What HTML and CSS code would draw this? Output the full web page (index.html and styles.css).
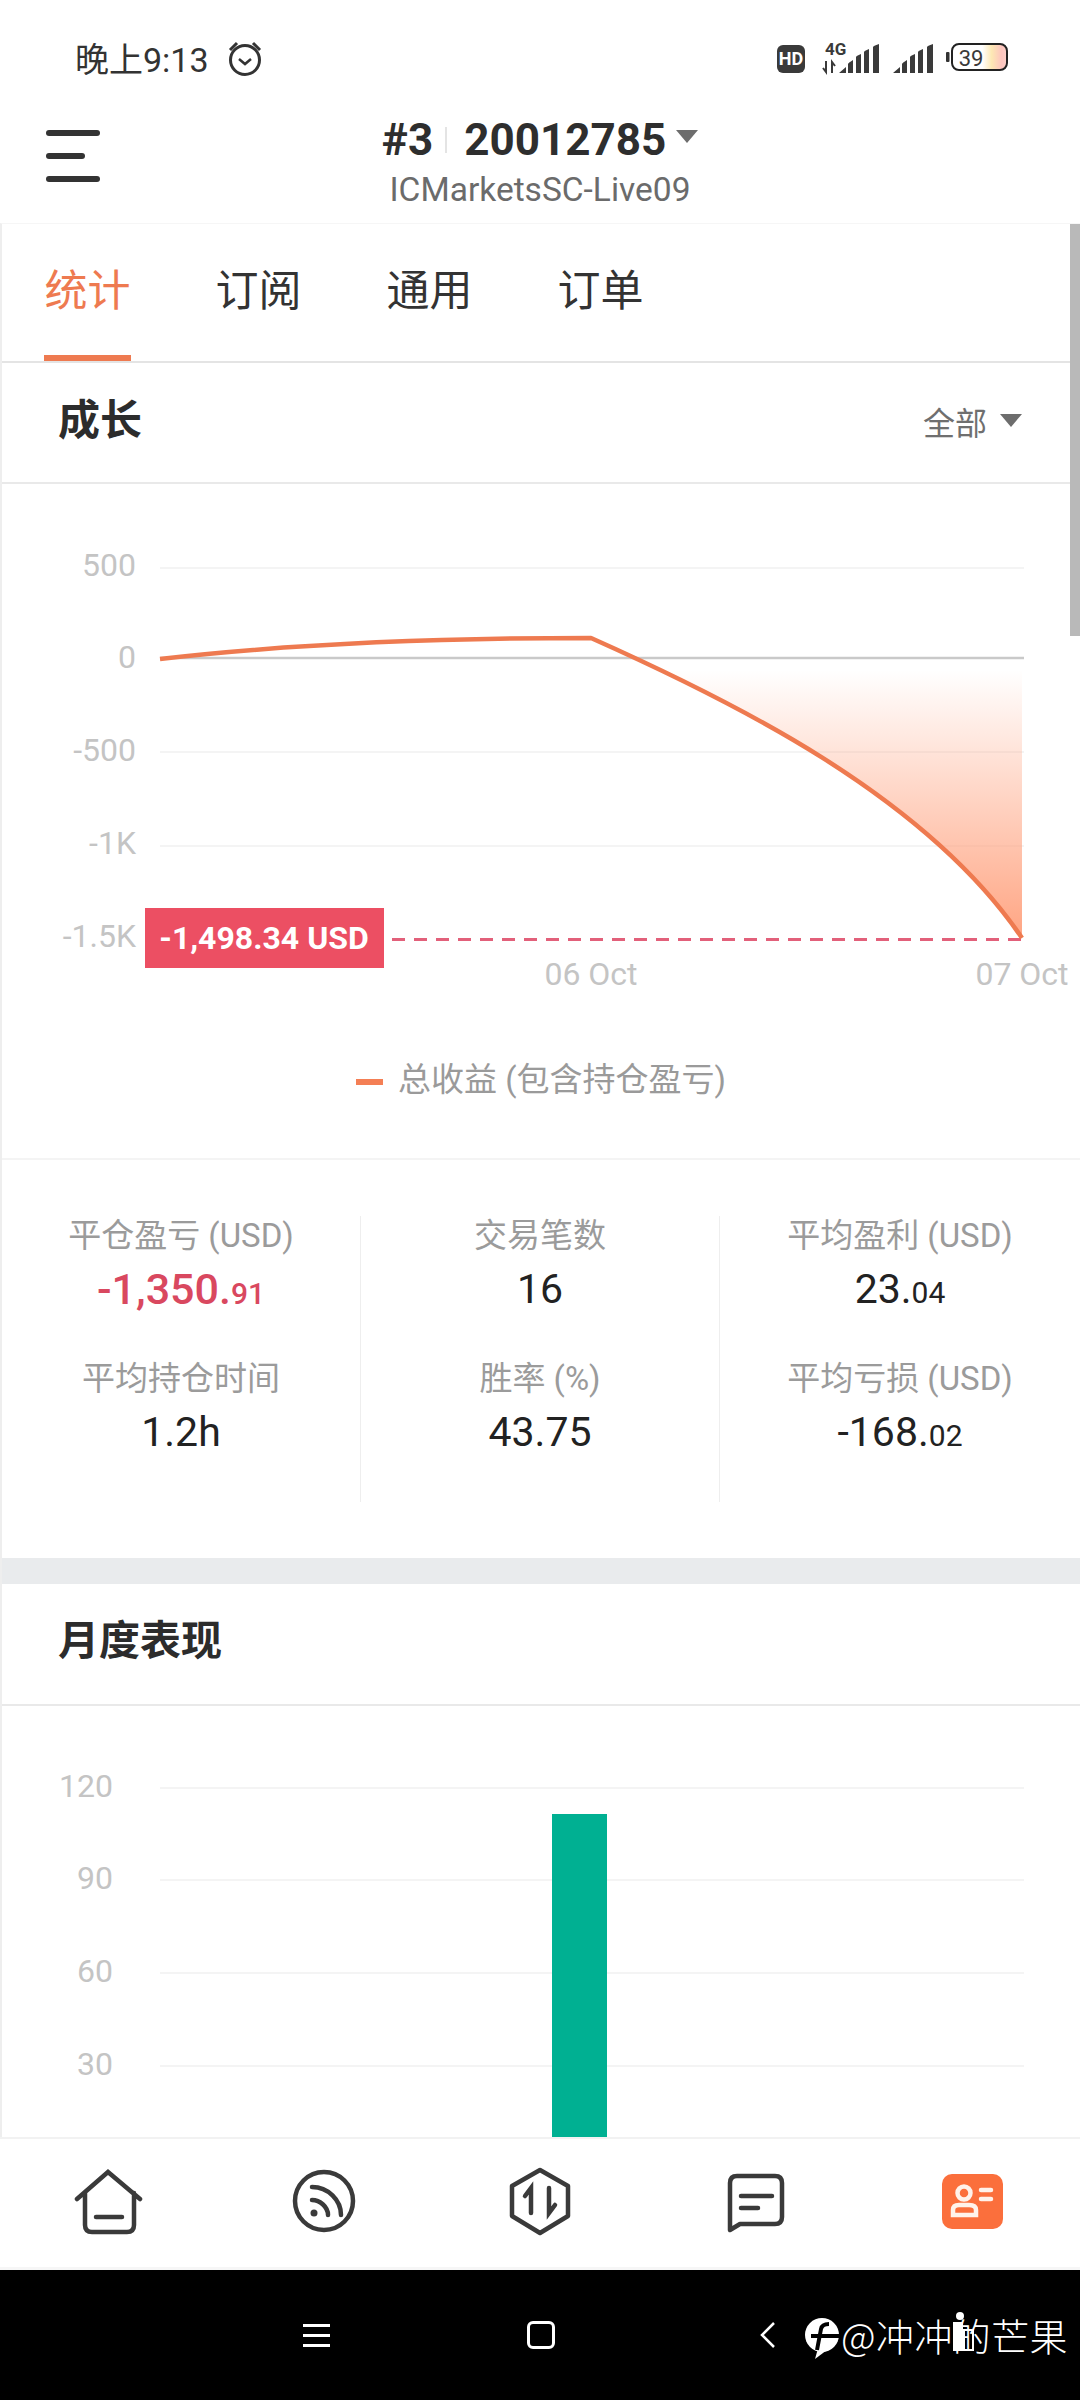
FILE: index.html
```html
<!DOCTYPE html>
<html lang="zh-CN">
<head>
<meta charset="utf-8">
<title>统计</title>
<link rel="stylesheet" href="styles.css">
</head>
<body>
<div class="page">
  <div class="status">
    <span class="time">晚上9:13</span>
    <svg class="alarm" viewBox="224 40 40 38"><circle cx="244" cy="60" r="14.5" fill="none" stroke="#333" stroke-width="3"/><path d="M238 59l6 5 6-5" fill="none" stroke="#333" stroke-width="2.5"/><path d="M229 50l7-7M259 50l-7-7" stroke="#333" stroke-width="3" fill="none"/></svg>
    <span class="status-gap"></span>
    <svg class="status-icons" viewBox="775 40 240 36">
      <rect x="777" y="45" width="28" height="28" rx="6" fill="#3a3a3a"/>
      <text x="791" y="65" class="hd">HD</text>
      <text x="825" y="55" class="fourg">4G</text>
      <path d="M826 61v11l-3-4M832 73V62l3 4" fill="none" stroke="#3a3a3a" stroke-width="2"/>
      <path d="M839 73l7-6v6zM848 73v-9q0-1 5-4v13zM856 73V57q0-1 5-3v19zM864 73V52q0-1 5-3v24zM873 73V47q0-1 6-3v29z" fill="#3a3a3a"/>
      <path d="M893 73l7-6v6zM902 73v-9q0-1 5-4v13zM910 73V57q0-1 5-3v19zM918 73V52q0-1 5-3v24zM927 73V47q0-1 6-3v29z" fill="#3a3a3a"/>
      <defs><linearGradient id="bat" x1="0" x2="1" y1="0" y2="0"><stop offset="0" stop-color="#fff"/><stop offset=".55" stop-color="#fff"/><stop offset=".72" stop-color="#fde8b4"/><stop offset=".9" stop-color="#fdc5be"/><stop offset="1" stop-color="#fdcfc8"/></linearGradient></defs>
      <rect x="946" y="52" width="3.5" height="10" rx="1" fill="#333"/>
      <rect x="952" y="44" width="55" height="26" rx="7" fill="url(#bat)" stroke="#222" stroke-width="2"/>
      <text x="971" y="66" class="batt">39</text>
    </svg>
  </div>
  <header class="head">
    <div class="burger"><i class="bl"></i><i class="bs"></i><i class="bl"></i></div>
    <div class="title">
      <div class="title-row"><span>#3</span><i class="title-sep"></i><span>20012785</span><i class="tri tri-dark"></i></div>
      <div class="server">ICMarketsSC-Live09</div>
    </div>
  </header>
  <main class="main">
    <nav class="tabs">
      <a class="tab tab-on">统计</a><a class="tab">订阅</a><a class="tab">通用</a><a class="tab">订单</a>
    </nav>
    <section class="sec-head">
      <h2 class="sec-title">成长</h2>
      <div class="range"><span>全部</span><i class="tri"></i></div>
    </section>
    <svg class="chart-a" viewBox="2 484 1068 556">
      <defs><linearGradient id="area" gradientUnits="userSpaceOnUse" x1="0" x2="0" y1="670" y2="938"><stop offset="0" stop-color="#ffa583" stop-opacity="0"/><stop offset="1" stop-color="#ffa583"/></linearGradient></defs>
      <path d="M160 568H1024M160 752H1024M160 846H1024" stroke="#f4f4f4" stroke-width="2"/>
      <path d="M160 658H1024" stroke="#c9c9c9" stroke-width="2.5"/>
      <path d="M591 638C730 700 925 795 1022 938V638Z" fill="url(#area)"/>
      <path d="M370 939.5H1022" stroke="#e2607a" stroke-width="3" stroke-dasharray="13 9"/>
      <path d="M160 659C290 644 450 638 591 638C730 700 925 795 1022 938" fill="none" stroke="#ee7a50" stroke-width="4.5" stroke-linejoin="round"/>
      <g class="axis">
        <text x="136" y="576">500</text><text x="136" y="668">0</text><text x="136" y="761">-500</text><text x="136" y="854">-1K</text><text x="136" y="947">-1.5K</text>
      </g>
      <g class="axis axis-x"><text x="591" y="985">06 Oct</text><text x="1022" y="985">07 Oct</text></g>
      <rect x="145" y="908" width="239" height="60" fill="#ec4f63"/>
      <text x="264" y="949" class="price">-1,498.34 USD</text>
    </svg>
    <div class="legend"><i class="legend-bar"></i><span>总收益 (包含持仓盈亏)</span></div>
    <section class="stats">
      <div class="col">
        <div class="cell"><div class="lab">平仓盈亏 (USD)</div><div class="val val-red">-1,350.<small>91</small></div></div>
        <div class="cell"><div class="lab">平均持仓时间</div><div class="val">1.2h</div></div>
      </div>
      <div class="col col-line">
        <div class="cell"><div class="lab">交易笔数</div><div class="val">16</div></div>
        <div class="cell"><div class="lab">胜率 (%)</div><div class="val">43.75</div></div>
      </div>
      <div class="col col-line">
        <div class="cell"><div class="lab">平均盈利 (USD)</div><div class="val">23.<small>04</small></div></div>
        <div class="cell"><div class="lab">平均亏损 (USD)</div><div class="val">-168.<small>02</small></div></div>
      </div>
    </section>
    <div class="band"></div>
    <section class="sec-head sec-head-b">
      <h2 class="sec-title sec-title-b">月度表现</h2>
    </section>
    <svg class="chart-b" viewBox="0 1706 1080 431">
      <path d="M160 1788H1024M160 1880H1024M160 1973H1024M160 2066H1024" stroke="#f4f4f4" stroke-width="2"/>
      <g class="axis"><text x="113" y="1797">120</text><text x="113" y="1889">90</text><text x="113" y="1982">60</text><text x="113" y="2075">30</text></g>
      <rect x="552" y="1814" width="55" height="323" fill="#00b092"/>
    </svg>
    <div class="scrollbar"></div>
  </main>
  <footer class="tabbar">
    <div class="tb"><svg class="tb-icon" viewBox="72 2165 70 70"><path d="M76 2198L107 2171L139 2198M84 2192V2224Q84 2231 91 2231H126Q133 2231 133 2224V2192M95 2216H121" /></svg></div>
    <div class="tb"><svg class="tb-icon" viewBox="288 2165 70 70"><circle cx="323" cy="2200" r="29"/><path d="M311 2186C327 2186 340 2199 340 2214M311 2199C319 2199 327 2206 327 2214"/><circle cx="313" cy="2212" r="3.5" class="solid"/></svg></div>
    <div class="tb"><svg class="tb-icon" viewBox="504 2165 70 70"><path d="M539 2169L567 2185V2215L539 2232L511 2215V2185Z" stroke-linejoin="round"/><path d="M530 2212V2187L524 2195M548 2187V2212L554 2204"/></svg></div>
    <div class="tb"><svg class="tb-icon" viewBox="720 2165 70 70"><path d="M729 2229V2182Q729 2175 736 2175H774Q781 2175 781 2182V2216Q781 2223 774 2223H739Z" stroke-linejoin="round"/><path d="M740 2195H771M740 2207H757"/></svg></div>
    <div class="tb"><svg class="tb-icon tb-on" viewBox="936 2165 70 70"><rect x="941" y="2173" width="61" height="55" rx="10" class="badge"/><circle cx="963" cy="2192" r="6.5" class="wh"/><path d="M952 2214V2209Q952 2204 958 2204H968Q975 2204 975 2209V2214Z" class="wh"/><path d="M980 2189H990M980 2198H990" class="wh"/></svg></div>
  </footer>
  <div class="navbar">
    <div class="nav-menu"><i></i><i></i><i></i></div>
    <div class="nav-home"></div>
    <svg class="nav-back" viewBox="0 0 16 28"><path d="M14 2L2 14L14 26"/></svg>
    <svg class="mark" viewBox="0 0 38 44"><circle cx="19" cy="18" r="17" fill="#fff"/><path d="M12 42L16 28L28 30Z" fill="#fff"/><path d="M14 33L18 12Q19 7 26 7M8 19H38" stroke="#000" stroke-width="4" fill="none"/></svg>
    <span class="wm">@冲冲的芒果</span>
    <svg class="person" viewBox="0 0 24 40"><circle cx="8" cy="4" r="4" fill="#fff"/><rect x="1" y="10" width="10" height="29" fill="#fff"/><rect x="12" y="18" width="9" height="20" fill="none" stroke="#fff" stroke-width="2"/></svg>
  </div>
</div>
</body>
</html>
```
FILE: styles.css
```css
* { box-sizing: border-box; }
html, body { margin: 0; padding: 0; background: #fff; }
body { font-family: Roboto, "Noto Sans CJK SC", sans-serif; color: #2c2c2c; }
.page { width: 1080px; height: 2400px; display: flex; flex-direction: column; overflow: hidden; background: #fff; }

.status { height: 100px; padding: 38px 0 0 75px; display: flex; align-items: flex-start; }
.time { font-size: 34px; line-height: 44px; color: #333; width: 150px; white-space: nowrap; }
.alarm { width: 40px; height: 38px; margin-top: 2px; }
.status-gap { flex: 1; }
.status-icons { width: 240px; height: 36px; margin: 2px 65px 0 0; }
.hd { font: 700 18px Roboto, sans-serif; fill: #fff; text-anchor: middle; }
.fourg { font: 700 17px Roboto, sans-serif; fill: #3a3a3a; }
.batt { font: 400 22px Roboto, sans-serif; fill: #3a3a3a; text-anchor: middle; }

.head { height: 123px; position: relative; display: flex; justify-content: center; }
.burger { position: absolute; left: 46px; top: 30px; display: flex; flex-direction: column; gap: 17px; }
.burger i { display: block; height: 6px; border-radius: 3px; background: #333; }
.bl { width: 54px; }
.bs { width: 39px; }
.title { width: 340px; display: flex; flex-direction: column; align-items: center; padding-top: 15px; }
.title-row { display: flex; align-items: center; height: 50px; font-size: 44px; font-weight: 700; color: #2e2e2e; white-space: nowrap; }
.title-sep { width: 2px; height: 26px; background: #e4e4e4; margin: 0 17px 0 12px; }
.tri { width: 0; height: 0; border-style: solid; border-width: 13px 11px 0; border-color: #6d6d6d transparent transparent; display: block; }
.tri-dark { margin: 0 0 8px 10px; }
.server { font-size: 33.5px; line-height: 38px; margin-top: 6px; color: #6b6b6b; white-space: nowrap; }

.main { flex: 1; min-height: 0; position: relative; overflow: hidden; border-left: 2px solid #eee; border-top: 1px solid #f6f6f6; }
.tabs { height: 139px; border-bottom: 2px solid #e4e4e4; padding-left: 42px; display: flex; gap: 84px; }
.tab { position: relative; width: 87px; font-size: 43px; line-height: 50px; padding-top: 42px; color: #333; white-space: nowrap; text-align: center; }
.tab-on { color: #ee7a50; }
.tab-on::after { content: ""; position: absolute; left: 0; right: 0; bottom: 0; height: 6px; background: #ee7a50; }

.sec-head { height: 121px; border-bottom: 2px solid #e9e9e9; display: flex; justify-content: space-between; align-items: center; padding: 0 58px 12px 56px; }
.sec-title { margin: 0; font-size: 42px; font-weight: 700; color: #2c2c2c; }
.sec-title-b { font-size: 41px; }
.range { display: flex; align-items: center; gap: 13px; margin-top: 8px; font-size: 32px; color: #6f6f6f; }
.sec-head-b { height: 122px; padding-bottom: 14px; }

svg text { font-family: Roboto, sans-serif; }
.chart-a { display: block; width: 1068px; height: 556px; }
.chart-b { display: block; width: 1080px; height: 431px; margin-left: -2px; }
.axis text { font-size: 32px; fill: #c4c4c4; text-anchor: end; }
.axis-x text { text-anchor: middle; }
.price { font-size: 32px; font-weight: 700; fill: #fff; text-anchor: middle; }

.legend { height: 120px; display: flex; align-items: flex-start; padding: 18px 0 0 354px; gap: 15px; font-size: 33px; line-height: 44px; color: #9a9a9a; border-bottom: 2px solid #f4f4f4; }
.legend-bar { width: 27px; height: 6px; background: #f47f55; margin-top: 21px; }

.stats { height: 398px; padding-top: 56px; display: grid; grid-template-columns: 358px 359px 1fr; align-items: start; }
.col { display: flex; flex-direction: column; }
.col-line { border-left: 1px solid #eeeeee; }
.cell { height: 143px; text-align: center; }
.lab { font-size: 33px; line-height: 40px; color: #9b9b9b; white-space: nowrap; }
.val { font-size: 41px; line-height: 66px; font-weight: 400; color: #222; white-space: nowrap; }
.val small { font-size: 30px; }
.val-red { color: #d9485f; font-size: 43px; font-weight: 500; }

.band { height: 26px; background: #e9ebed; }

.scrollbar { position: absolute; top: 0; right: 0; width: 10px; height: 412px; background: #b9b9b9; }

.tabbar { height: 133px; display: grid; grid-template-columns: repeat(5, 216px); border-top: 2px solid #f2f2f2; border-bottom: 3px solid #f6f6f6; padding-top: 27px; }
.tb { display: flex; justify-content: center; align-items: flex-start; }
.tb-icon { width: 70px; height: 70px; fill: none; stroke: #3a3a3a; stroke-width: 4.5; stroke-linecap: round; }
.tb-icon .solid { fill: #3a3a3a; stroke: none; }
.tb-icon .badge { fill: #fb6f3c; stroke: none; }
.tb-icon .wh { stroke: #fff2ea; stroke-width: 4.5; fill: none; }

.navbar { height: 130px; background: #000; display: flex; align-items: center; position: relative; padding-left: 303px; }
.nav-menu { width: 27px; display: flex; flex-direction: column; gap: 7px; }
.nav-menu i { display: block; height: 3px; background: #fff; }
.nav-home { width: 28px; height: 28px; border: 3px solid #fff; border-radius: 6px; margin-left: 197px; }
.nav-back { width: 16px; height: 28px; margin-left: 205px; fill: none; stroke: #fff; stroke-width: 2.5; }
.mark { width: 38px; height: 44px; margin-left: 27px; margin-top: 8px; }
.wm { margin-left: 0; font-size: 38px; letter-spacing: .4px; line-height: 44px; color: #fff; white-space: nowrap; font-family: "Noto Sans CJK SC", sans-serif; font-weight: 300; }
.person { position: absolute; left: 952px; top: 42px; width: 24px; height: 40px; }
```
